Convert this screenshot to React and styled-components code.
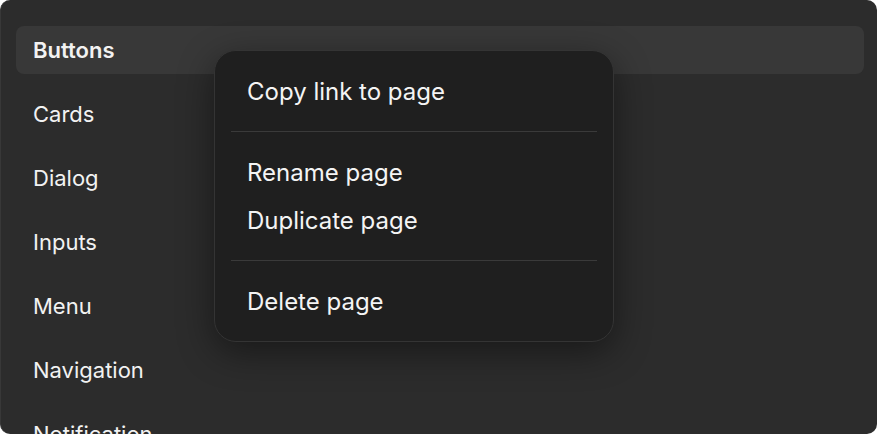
import React from 'react'
import styled, { createGlobalStyle } from 'styled-components'

const GlobalStyle = createGlobalStyle`
  html, body {
    margin: 0;
    padding: 0;
    background: #ffffff;
  }
  body {
    font-family: 'Inter', 'Noto Sans', sans-serif;
  }
`

const pages = ['Buttons', 'Cards', 'Dialog', 'Inputs', 'Menu', 'Navigation', 'Notification', 'Tabs']

const menuGroups = [
  ['Copy link to page'],
  ['Rename page', 'Duplicate page'],
  ['Delete page'],
]

export default function App() {
  return (
    <>
      <GlobalStyle />
      <Panel>
        <PageList>
          {pages.map((name, i) => (
            <PageItem key={name} active={i === 0}>{name}</PageItem>
          ))}
        </PageList>
        <ContextMenu>
          {menuGroups.map((group, gi) => (
            <React.Fragment key={gi}>
              {gi > 0 && <Separator />}
              {group.map(label => (
                <MenuItem key={label}>{label}</MenuItem>
              ))}
            </React.Fragment>
          ))}
        </ContextMenu>
      </Panel>
    </>
  )
}

const Panel = styled.div`
  position: relative;
  width: 877px;
  height: 434px;
  box-sizing: border-box;
  background: #2c2c2c;
  border-radius: 10px;
  border-left: 1px solid #383838;
  overflow: hidden;
`

const PageList = styled.ul`
  list-style: none;
  margin: 0;
  padding: 26px 13px 0 15px;
  display: flex;
  flex-direction: column;
  gap: 16px;
`

const PageItem = styled.li`
  height: 48px;
  display: flex;
  align-items: center;
  padding-left: 17px;
  border-radius: 8px;
  font-size: 22px;
  font-weight: ${p => (p.active ? 600 : 400)};
  color: #f2f2f2;
  background: ${p => (p.active ? '#383838' : 'transparent')};
`

const ContextMenu = styled.div`
  position: absolute;
  left: 213px;
  top: 50px;
  width: 400px;
  box-sizing: border-box;
  padding: 16px;
  background: #1f1f1f;
  border: 1px solid #343434;
  border-radius: 22px;
  box-shadow: 0 10px 36px rgba(0, 0, 0, 0.45);
  display: flex;
  flex-direction: column;
`

const MenuItem = styled.div`
  height: 48px;
  display: flex;
  align-items: center;
  padding-left: 16px;
  font-size: 24px;
  color: #f4f4f4;
`

const Separator = styled.div`
  height: 1px;
  margin: 16px 0;
  background: #3a3a3a;
`
